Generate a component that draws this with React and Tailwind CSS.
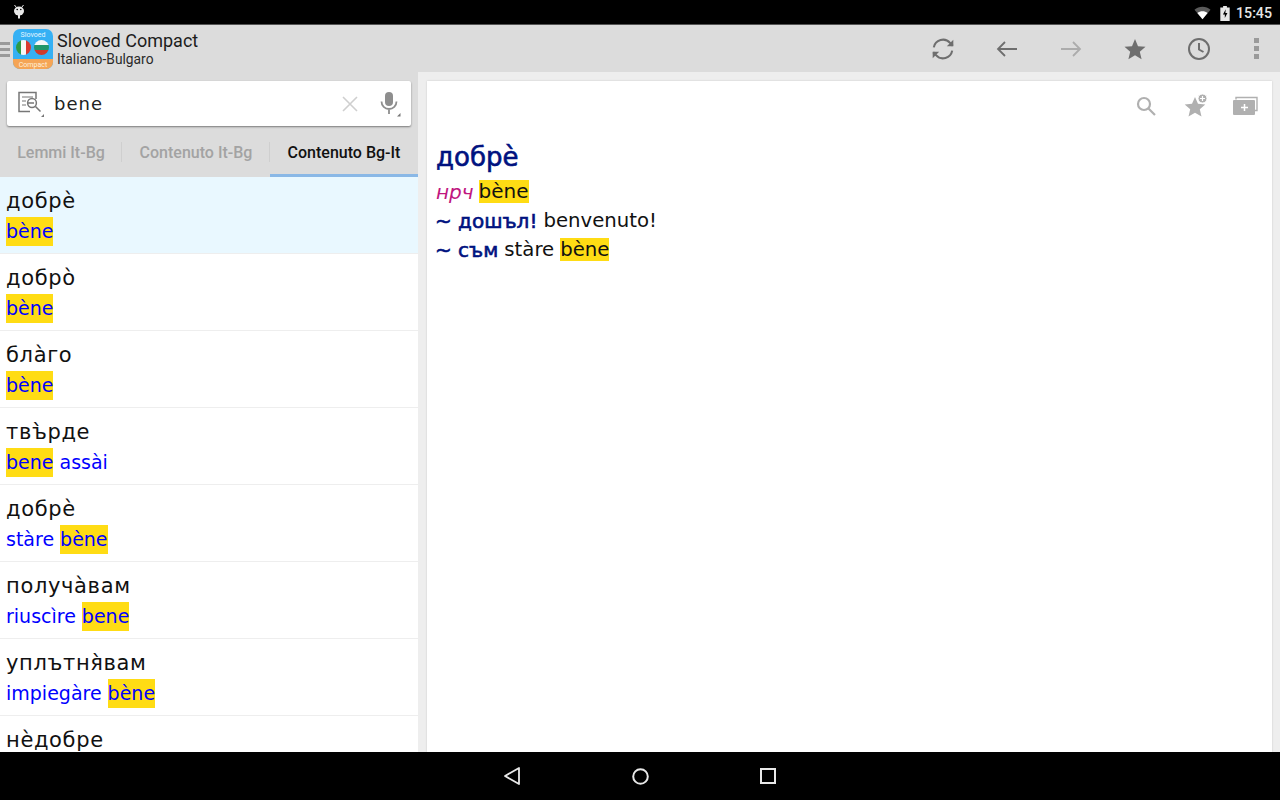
import React from "react";

const entries = [
  { word: "добрè", parts: [["bène", true]], active: true },
  { word: "добрò", parts: [["bène", true]] },
  { word: "блàго", parts: [["bène", true]] },
  { word: "твъ̀рде", parts: [["bene", true], ["assài", false]] },
  { word: "добрè", parts: [["stàre", false], ["bène", true]] },
  { word: "получàвам", parts: [["riuscìre", false], ["bene", true]] },
  { word: "уплътня̀вам", parts: [["impiegàre", false], ["bène", true]] },
  { word: "нѐдобре", parts: [] },
];

const Mark = ({ children }) => (
  <span className="inline-block h-[29px] bg-[#ffdc14] leading-[29px]">{children}</span>
);

const Icon = ({ className, children, stroke = "currentColor", fill = "none", sw = 2 }) => (
  <svg viewBox="0 0 24 24" className={className} stroke={stroke} fill={fill} strokeWidth={sw}>
    {children}
  </svg>
);

const AppLogo = () => (
  <svg viewBox="0 0 40 40" className="w-10 h-10 shrink-0 -ml-[2px]">
    <defs>
      <clipPath id="lg"><rect width="40" height="40" rx="7" /></clipPath>
      <clipPath id="it"><circle cx="10.5" cy="18.5" r="7.5" /></clipPath>
      <clipPath id="bg"><circle cx="28.5" cy="18.5" r="7.5" /></clipPath>
    </defs>
    <g clipPath="url(#lg)">
      <rect width="40" height="40" fill="#35b0f4" />
      <rect y="30" width="40" height="10" fill="#f5a556" />
      <text x="20" y="8" textAnchor="middle" fontSize="7" fill="#e6f6ff" fontFamily="Roboto, sans-serif">Slovoed</text>
      <text x="20" y="37.500" textAnchor="middle" fontSize="7" fill="#fff1dd" fontFamily="Roboto, sans-serif">Compact</text>
    </g>
    <g clipPath="url(#it)">
      <rect x="3" y="11" width="5" height="15" fill="#2f9a46" />
      <rect x="8" y="11" width="5" height="15" fill="#f7f7f7" />
      <rect x="13" y="11" width="5" height="15" fill="#d8392f" />
    </g>
    <g clipPath="url(#bg)">
      <rect x="21" y="11" width="16" height="5" fill="#f7f7f7" />
      <rect x="21" y="16" width="16" height="5" fill="#22966a" />
      <rect x="21" y="21" width="16" height="5" fill="#cf3a2c" />
    </g>
  </svg>
);

export default function App() {
  return (
    <div className="w-[1280px] h-[800px] overflow-hidden flex flex-col bg-[#eeeeee] font-['Roboto',sans-serif]">
      {/* Status bar */}
      <div className="h-[25px] shrink-0 bg-black border-b border-[#555] flex items-center justify-between pl-[13px] pr-[8px] text-white">
        <svg viewBox="0 0 12 16" className="w-3 h-4" fill="#e8e8e8">
          <ellipse cx="6" cy="7" rx="5" ry="4.6" />
          <rect x="5" y="11" width="2" height="3.5" />
          <path d="M1.5 1l2 2.6M10.500 1l-2 2.6" stroke="#e8e8e8" strokeWidth="1" />
          <circle cx="4.200" cy="5.500" r="0.800" fill="#000" />
          <circle cx="7.800" cy="5.500" r="0.800" fill="#000" />
        </svg>
        <div className="flex items-center pt-[2px]">
          <svg viewBox="0 0 18 14" className="w-[17px] h-[14px]" fill="none">
            <path d="M0.500 3.500C5 -0.700 13 -0.700 17.500 3.500L9 13.500z" fill="#5a5a5a" />
            <path d="M3.600 7C6.600 4.400 11.400 4.400 14.400 7L9 13.500z" fill="#fff" />
          </svg>
          <svg viewBox="0 0 10 16" className="ml-[9px] w-[10px] h-[15px]">
            <path d="M3 0h4v1.500h3V16H0V1.500h3z" fill="#e8e8e8" />
            <path d="M5.800 3.500L2.800 9h2v3.800L7.600 7.500H5.400z" fill="#000" />
          </svg>
          <span className="ml-[6px] w-[36px] text-[14.2px] font-medium leading-none text-[#e6e6e6]">15:45</span>
        </div>
      </div>

      {/* Action bar */}
      <div className="h-[47px] shrink-0 bg-[#dcdcdc] flex items-center">
        <div className="flex flex-col gap-[3px] w-[10px] overflow-hidden mt-[1px]">
          <span className="h-[3px] bg-[#9a9a9a]" />
          <span className="h-[3px] bg-[#9a9a9a]" />
          <span className="h-[3px] bg-[#9a9a9a]" />
        </div>
        <div className="ml-[5px]"><AppLogo /></div>
        <div className="ml-[4px] text-black">
          <div className="text-[18px] leading-[22px] text-[#1c1c1c]">Slovoed Compact</div>
          <div className="text-[13.8px] leading-[15px] text-[#2a2a2a]">Italiano-Bulgaro</div>
        </div>
        <div className="ml-auto flex items-center text-[#6e6e6e]">
          <div className="w-16 flex justify-center">
            <Icon className="w-[26px] h-[26px]" sw={1.9}>
              <path d="M3.500 10.500a8.700 8.700 0 0 1 15-4.200L21 9" />
              <path d="M20.500 13.500a8.700 8.700 0 0 1-15 4.200L3 15" />
              <path d="M21.500 3.500V9.500h-6" fill="currentColor" stroke="none" />
              <path d="M2.500 20.500V14.500h6" fill="currentColor" stroke="none" />
            </Icon>
          </div>
          <div className="w-16 flex justify-center">
            <Icon className="w-6 h-6" sw={1.8}><path d="M22 12H3M10 5l-7 7 7 7" /></Icon>
          </div>
          <div className="w-16 flex justify-center text-[#acacac]">
            <Icon className="w-6 h-6" sw={1.8}><path d="M2 12h19M14 5l7 7-7 7" /></Icon>
          </div>
          <div className="w-16 flex justify-center">
            <Icon className="w-6 h-6" stroke="none" fill="currentColor">
              <path d="M12 2l3 7.200 7.500.600-5.700 5 1.800 7.400L12 18.200l-6.600 4 1.800-7.400-5.700-5L9 9.200z" />
            </Icon>
          </div>
          <div className="w-16 flex justify-center">
            <Icon className="w-6 h-6" sw={2}>
              <circle cx="12" cy="12" r="10" />
              <path d="M12 6v6.500l4.500 2.500" />
            </Icon>
          </div>
          <div className="w-12 ml-[1px] flex flex-col items-center gap-[3px]">
            <span className="w-[5px] h-[5px] bg-[#9a9a9a]" />
            <span className="w-[5px] h-[5px] bg-[#9a9a9a]" />
            <span className="w-[5px] h-[5px] bg-[#9a9a9a]" />
          </div>
        </div>
      </div>

      <div className="flex-1 flex min-h-0">
        {/* Left panel */}
        <div className="w-[418px] shrink-0 flex flex-col bg-white">
          <div className="bg-[#dcdcdc] h-[105px] shrink-0 flex flex-col">
            <div className="mt-[9px] mx-[7px] w-[404px] h-[45px] bg-white rounded-[2px] shadow-[0_1px_2px_rgba(0,0,0,0.45)] flex items-center">
              <svg viewBox="0 0 28 28" className="ml-[10px] w-7 h-7" fill="none" stroke="#777" strokeWidth="1.500">
                <path d="M19 9V2.500H2v19h11" />
                <path d="M5 7h11M5 11h4M5 15h4" strokeWidth="1.200" />
                <circle cx="15" cy="13" r="4.400" />
                <path d="M11 13h6M18.500 16.500l5 5" />
                <path d="M27 24v3h-3z" fill="#777" stroke="none" />
              </svg>
              <span className="ml-[9px] text-[18px] tracking-[1px] text-[#222] font-['DejaVu_Sans',sans-serif] leading-none">bene</span>
              <svg viewBox="0 0 16 16" className="ml-auto w-[16px] h-[16px]" stroke="#cfcfcf" strokeWidth="1.600" fill="none">
                <path d="M1 1l14 14M15 1L1 15" />
              </svg>
              <svg viewBox="0 0 24 28" className="ml-[19px] mr-[10px] w-6 h-7" fill="none">
                <rect x="8" y="2" width="8" height="14" rx="4" fill="#8e8e8e" />
                <path d="M4.500 11.500a7.500 7.500 0 0 0 15 0M12 19v5" stroke="#8e8e8e" strokeWidth="1.800" />
                <path d="M23.500 23v3.500H20z" fill="#777" />
              </svg>
            </div>
            <div className="flex mt-[1px] flex-1 text-[16px]">
              <div className="w-[122px] pt-[1px] flex items-center justify-center text-[#a3a3a3] font-medium relative">
                Lemmi It-Bg
                <span className="absolute right-0 top-[15px] h-[20px] w-px bg-[#cfcfcf]" />
              </div>
              <div className="w-[148px] pt-[1px] flex items-center justify-center text-[#a3a3a3] font-medium relative">
                Contenuto It-Bg
                <span className="absolute right-0 top-[15px] h-[20px] w-px bg-[#cfcfcf]" />
              </div>
              <div className="w-[148px] pt-[1px] flex items-center justify-center text-[#111] font-medium relative">
                Contenuto Bg-It
                <span className="absolute left-0 right-0 bottom-0 h-[3px] bg-[#8ab8e6]" />
              </div>
            </div>
          </div>

          {/* Results */}
          <div className="flex-1 min-h-0 overflow-hidden font-['DejaVu_Sans',sans-serif]">
            {entries.map((e, i) => (
              <div
                key={i}
                className={`h-[77px] pl-[6px] pt-[9px] border-b border-[#eeeeee] ${e.active ? "bg-[#e9f8ff]" : "bg-white"}`}
              >
                <div className="h-[30px] text-[21px] leading-[30px] text-[#111] tracking-[0.65px]">{e.word}</div>
                <div className="h-[29px] mt-[1px] flex gap-[6px] text-[19px] leading-[29px] text-[#0000ff]">
                  {e.parts.map(([t, hl], j) => (hl ? <Mark key={j}>{t}</Mark> : <span key={j}>{t}</span>))}
                </div>
              </div>
            ))}
          </div>
        </div>

        {/* Article */}
        <div className="flex-1 pl-[9px] pr-[8px] pt-[9px] min-w-0">
          <div className="h-full bg-white shadow-[0_0_2px_rgba(0,0,0,0.15)] pl-[9px] font-['DejaVu_Sans',sans-serif]">
            <div className="h-[50px] flex items-center justify-end pr-[14px] text-[#b4b4b4]">
              <Icon className="w-6 h-6" sw={2.2} stroke="#b0b0b0">
                <circle cx="10" cy="10" r="6" />
                <path d="M14.500 14.500L21 21" />
              </Icon>
              <svg viewBox="0 0 26 26" className="ml-[26px] w-[26px] h-[26px]" fill="#b0b0b0">
                <path d="M11 4l3 6.800 7.300.700-5.500 4.800 1.700 7.200-6.500-3.800-6.500 3.800 1.700-7.200L.700 11.500l7.300-.700z" />
                <circle cx="18.500" cy="5.500" r="4.500" stroke="#fff" strokeWidth="1" />
                <path d="M16 5.500h5M18.500 3v5" stroke="#fff" strokeWidth="1.200" />
              </svg>
              <svg viewBox="0 0 26 22" className="ml-[22px] w-[26px] h-[22px]" fill="none">
                <path d="M4 4.500V2.500h21v13h-2" stroke="#b0b0b0" strokeWidth="1.400" />
                <rect x="1" y="5" width="22" height="15" rx="1" fill="#b0b0b0" />
                <path d="M9 12.500h7M12.500 9v7" stroke="#fff" strokeWidth="1.500" />
              </svg>
            </div>
            <div className="mt-[10px] text-[26px] leading-[32px] text-[#00127f] [-webkit-text-stroke-width:0.6px]">добрè</div>
            <div className="mt-[4px] h-[29px] flex items-center gap-[5px] text-[20px]">
              <span className="italic text-[#c0167f]">нрч</span>
              <span className="inline-block h-[23px] leading-[23px] bg-[#ffdc14] text-[#111]">bène</span>
            </div>
            <div className="-ml-px">
              <div className="h-[29px] flex items-center gap-[6px] text-[19.7px] text-[#111]">
                <span className="text-[#00127f] text-[20px] [-webkit-text-stroke-width:0.6px]">~ дошъл!</span>
                <span>benvenuto!</span>
              </div>
              <div className="h-[29px] flex items-center gap-[6px] text-[19.7px] text-[#111]">
                <span className="text-[#00127f] text-[20px] [-webkit-text-stroke-width:0.6px]">~ съм</span>
                <span>stàre</span>
                <span className="inline-block h-[23px] leading-[23px] bg-[#ffdc14]">bène</span>
              </div>
            </div>
          </div>
        </div>
      </div>

      {/* Nav bar */}
      <div className="h-[48px] shrink-0 bg-black flex items-center justify-center">
        <div className="w-[272px] flex items-center justify-between text-[#e8e8e8]">
          <svg viewBox="0 0 16 18" className="w-4 h-[18px]" fill="none" stroke="currentColor" strokeWidth="1.800" strokeLinejoin="round">
            <path d="M15 1v16L1 9z" />
          </svg>
          <svg viewBox="0 0 17 17" className="w-[17px] h-[17px]" fill="none" stroke="currentColor" strokeWidth="2">
            <circle cx="8.500" cy="8.500" r="7.300" />
          </svg>
          <svg viewBox="0 0 16 16" className="w-4 h-4" fill="none" stroke="currentColor" strokeWidth="2">
            <rect x="1" y="1" width="14" height="14" />
          </svg>
        </div>
      </div>
    </div>
  );
}
